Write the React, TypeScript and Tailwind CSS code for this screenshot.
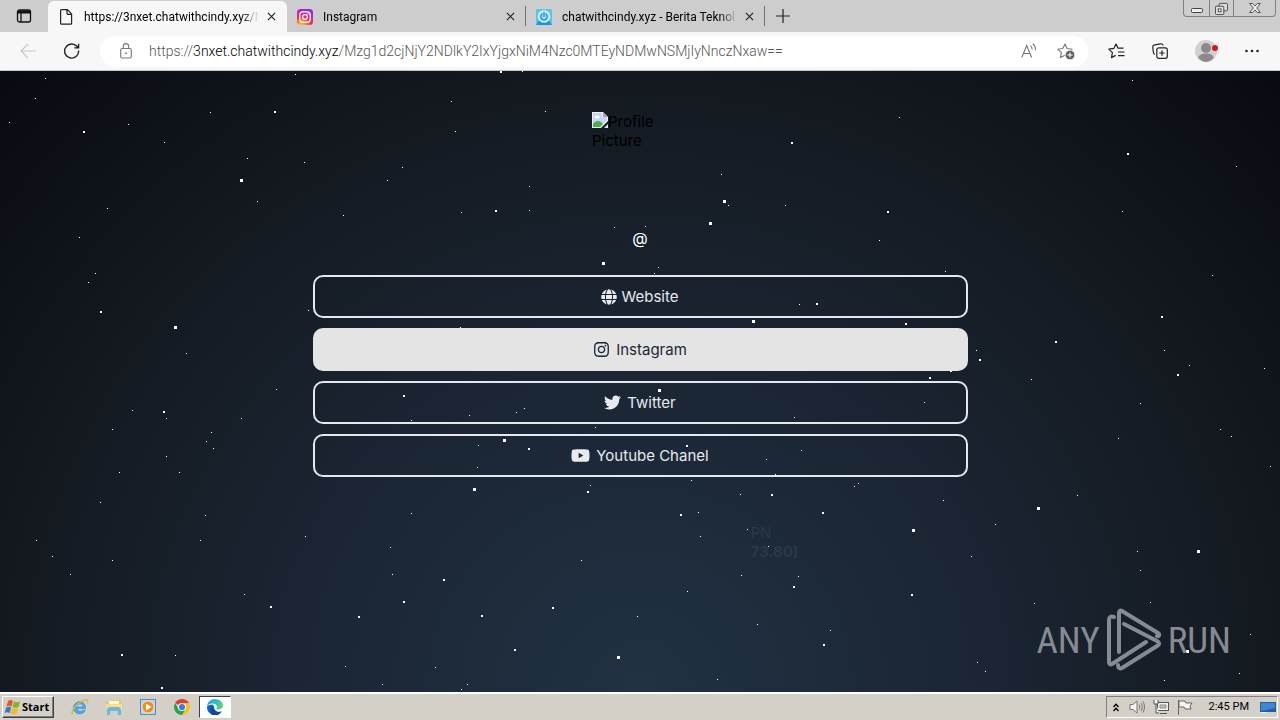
import type { ReactNode } from "react";
import { FaGlobe, FaInstagram, FaTwitter, FaYoutube } from "react-icons/fa";

type Point = [number, number];

const smallStars: Point[] = [
  [45, 78], [35, 98], [9, 122], [295, 74], [128, 124], [210, 112], [164, 142], [247, 158], [304, 162], [257, 201],
  [402, 167], [387, 180], [451, 101], [455, 131], [522, 71], [545, 111], [529, 186], [461, 212], [529, 210], [343, 215],
  [107, 208], [79, 237], [95, 273], [88, 282], [186, 353], [614, 227], [308, 310], [460, 327], [276, 389], [132, 410],
  [166, 418], [112, 429], [241, 418], [211, 432], [206, 441], [213, 448], [166, 456], [119, 472], [179, 472], [100, 502],
  [205, 515], [36, 540], [52, 556], [70, 574], [112, 560], [200, 540], [305, 536], [411, 513], [390, 547], [392, 574],
  [581, 560], [637, 616], [244, 594], [175, 655], [345, 666], [382, 684], [435, 667], [467, 684], [461, 689], [590, 485],
  [477, 467], [478, 445], [469, 415], [516, 412], [524, 408], [411, 420], [595, 427], [1132, 80], [899, 117], [1236, 166],
  [721, 174], [728, 205], [785, 205], [1122, 211], [879, 240], [945, 271], [1212, 275], [645, 226], [658, 267], [654, 273],
  [799, 304], [1164, 350], [1189, 365], [1264, 368], [976, 350], [1031, 379], [924, 402], [794, 417], [1140, 403], [1220, 429],
  [1231, 436], [1118, 438], [707, 435], [801, 450], [766, 459], [775, 474], [691, 480], [740, 494], [854, 486], [858, 483],
  [943, 500], [698, 512], [1077, 495], [1270, 466], [995, 524], [971, 556], [747, 529], [700, 536], [768, 546], [1137, 551],
  [1140, 570], [741, 575], [798, 576], [687, 591], [757, 624], [830, 630], [1034, 603], [1150, 602], [1108, 620], [1250, 634],
  [1239, 673], [1164, 680], [977, 662], [985, 671], [717, 679],
];

const mediumStars: Point[] = [
  [83, 131], [274, 111], [500, 71], [495, 210], [100, 311], [403, 395], [163, 411], [443, 579], [403, 601], [358, 616],
  [481, 615], [552, 607], [270, 606], [121, 654], [161, 687], [514, 649], [587, 491], [528, 448], [791, 142], [1127, 153],
  [887, 211], [816, 303], [905, 323], [1161, 316], [1055, 341], [1177, 374], [979, 359], [950, 370], [929, 377], [686, 445],
  [771, 494], [822, 512], [680, 514], [793, 586], [911, 594], [823, 644],
];

const largeStars: Point[] = [
  [240, 179], [174, 326], [602, 262], [473, 488], [503, 439], [617, 656], [723, 200], [709, 222], [752, 320], [658, 389],
  [912, 529], [1037, 507], [1197, 550], [1186, 650],
];

function Stars({ points, size }: { points: Point[]; size: number }) {
  return (
    <>
      {points.map(([x, y]) => (
        <rect key={`${x}-${y}`} x={x} y={y - 71} width={size} height={size} fill="#fff" />
      ))}
    </>
  );
}

function CloseIcon() {
  return (
    <svg viewBox="0 0 10 10" className="size-[9px]" fill="none" stroke="#222" strokeWidth="1.3">
      <path d="M1 1l8 8M9 1L1 9" />
    </svg>
  );
}

function Tab({ icon, title, active = false }: { icon: ReactNode; title: string; active?: boolean }) {
  return (
    <div
      className={
        active
          ? "flex h-[31px] w-[239px] items-center gap-[10px] rounded-t-md bg-[#f7f7f7] pl-[10px] pr-2"
          : "flex h-[31px] w-[238px] items-center gap-[10px] pl-[10px] pr-[7px]"
      }
    >
      {icon}
      <a
        href="#tab"
        className="min-w-0 flex-1 overflow-hidden whitespace-nowrap text-[12px] leading-4 [mask-image:linear-gradient(to_right,black_90%,transparent)]"
      >
        {title}
      </a>
      <button aria-label={`Close ${title}`} className="-ml-[6px] grid size-4 shrink-0 place-items-center">
        <CloseIcon />
      </button>
    </div>
  );
}

function TabStrip() {
  return (
    <div className="flex h-8 items-end bg-[#cdcdcd]">
      <button aria-label="Tab actions" className="grid h-8 w-12 place-items-center">
        <svg viewBox="0 0 16 16" className="size-4" fill="none" stroke="#111" strokeWidth="1.3">
          <rect x="1.5" y="2" width="13" height="12" rx="2" />
          <path d="M1.5 4h13" strokeWidth="3" />
          <path d="M5 5v9" />
        </svg>
      </button>
      <Tab
        active
        title="https://3nxet.chatwithcindy.xyz/M"
        icon={
          <svg viewBox="0 0 16 16" className="size-4" fill="none" stroke="#222" strokeWidth="1.2">
            <path d="M2.6 1.5c0-.5.3-.8.8-.8h6l4.2 4.2v9.3c0 .6-.3.9-.8.9H3.4c-.5 0-.8-.3-.8-.9zM9 .7v3.8c0 .5.3.8.8.8h3.8" />
          </svg>
        }
      />
      <Tab
        title="Instagram"
        icon={
          <svg viewBox="0 0 16 16" className="size-4" fill="none" stroke="#fff" strokeWidth="1.3">
            <defs>
              <radialGradient id="insta" cx=".28" cy="1.05" r="1.15">
                <stop offset="0" stopColor="#fed33b" />
                <stop offset=".25" stopColor="#fb8a2e" />
                <stop offset=".52" stopColor="#ee2a5d" />
                <stop offset=".78" stopColor="#c724b1" />
                <stop offset="1" stopColor="#7d2ff0" />
              </radialGradient>
            </defs>
            <rect width="16" height="16" rx="3.5" fill="url(#insta)" stroke="none" />
            <rect x="2.8" y="2.8" width="10.4" height="10.4" rx="3" />
            <circle cx="8" cy="8" r="2.4" />
            <circle cx="11" cy="5" r=".7" fill="#fff" stroke="none" />
          </svg>
        }
      />
      <div className="mb-[6px] h-5 w-px bg-[#707070]" />
      <Tab
        title="chatwithcindy.xyz - Berita Teknol"
        icon={
          <svg viewBox="0 0 16 16" className="size-4" fill="none" strokeLinecap="round">
            <rect width="16" height="16" rx="1" fill="#5cc3f0" />
            <path d="M0 16l3-4.500h10l3 4.500z" fill="#1f96dc" />
            <circle cx="8" cy="7.5" r="6.200" fill="#e2f4fc" />
            <circle cx="8" cy="7.5" r="4.900" fill="#a5dcf6" />
            <path d="M6 5.200a3.200 3.200 0 1 0 4 0M8 3.400v4" stroke="#1b8fd6" strokeWidth="1.3" />
          </svg>
        }
      />
      <div className="mb-[6px] h-5 w-px bg-[#707070]" />
      <button aria-label="New tab" className="grid h-8 w-9 place-items-center">
        <svg viewBox="0 0 14 14" className="size-[14px]" stroke="#222" strokeWidth="1.2">
          <path d="M7 0v14M0 7h14" />
        </svg>
      </button>
      <div className="ml-auto mr-1 flex h-[17px] self-start rounded-b border border-t-0 border-[#808080]">
        <button aria-label="Minimize" className="grid w-[25px] place-items-center">
          <svg viewBox="0 0 12 12" className="size-3" fill="#eee" stroke="#444">
            <rect x=".5" y="6.5" width="11" height="4" rx="1" />
          </svg>
        </button>
        <button aria-label="Restore" className="grid w-[25px] place-items-center border-x border-[#808080]">
          <svg viewBox="0 0 14 14" className="size-[13px]" fill="#ddd" stroke="#444">
            <rect x="4.5" y="1.5" width="9" height="8" rx="1" />
            <rect x=".5" y="4.5" width="9" height="9" rx="1" />
            <rect x="3.5" y="7.5" width="3" height="3" fill="#fff" />
          </svg>
        </button>
        <button aria-label="Close window" className="grid w-[41px] place-items-center">
          <svg viewBox="0 0 12 10" className="h-[10px] w-3" fill="#eee" stroke="#444" strokeWidth=".9">
            <path d="M.7.5h3L6 3 8.3.5h3L7.7 5l3.6 4.5h-3L6 7 3.7 9.5h-3L4.3 5z" />
          </svg>
        </button>
      </div>
    </div>
  );
}

function Toolbar() {
  return (
    <div className="flex h-[39px] items-center border-b border-[#c4c8cc] bg-[#f7f7f7]">
      <button aria-label="Back" className="ml-5 grid size-4 place-items-center">
        <svg viewBox="0 0 16 16" className="size-4" fill="none" stroke="#c9c9c9" strokeWidth="1.2">
          <path d="M16 8H1M8 1L1 8l7 7" />
        </svg>
      </button>
      <button aria-label="Refresh" className="ml-7 grid size-4 place-items-center">
        <svg viewBox="0 0 16 16" className="size-4" fill="none" stroke="#222" strokeWidth="1.4">
          <path d="M14.6 7.5A7 7 0 1 1 12 2.6l2.2 2M14.6.7v4.2h-4.3" />
        </svg>
      </button>
      <div className="ml-5 flex h-[31px] min-w-0 flex-1 items-center rounded-full bg-white pl-5 pr-[13px]">
        <svg viewBox="0 0 12 16" className="h-4 w-3 shrink-0" fill="none" stroke="#777" strokeWidth="1.1">
          <rect x=".7" y="5.5" width="10.6" height="9.5" rx="1.5" />
          <path d="M3.3 5.5V3.3a2.7 2.7 0 0 1 5.4 0v2.2" />
          <circle cx="6" cy="10.2" r=".9" fill="#777" stroke="none" />
        </svg>
        <div aria-label="Address" className="ml-[17px] min-w-0 flex-1 overflow-hidden whitespace-nowrap text-[14px] font-light leading-5 text-[#555]">
          https://<span className="text-black">3nxet.chatwithcindy.xyz</span>/Mzg1d2cjNjY2NDlkY2IxYjgxNiM4Nzc0MTEyNDMwNSMjIyNnczNxaw==
        </div>
        <button aria-label="Read aloud" className="grid h-5 w-4 place-items-center">
          <svg viewBox="0 0 16 16" className="size-4" fill="none" stroke="#777" strokeWidth="1.1">
            <path d="M.8 14.5L5.7 2.5l4.9 12M2.5 10.5h6.4M9.5 2.6c1.2 1 1.8 2.3 1.6 4M11.8.8c2 1.6 2.9 4 2.5 6.6" />
          </svg>
        </button>
        <button aria-label="Add to favorites" className="ml-5 grid h-5 w-[18px] place-items-center">
          <svg viewBox="0 0 18 17" className="h-[17px] w-[18px]" fill="none" stroke="#777" strokeWidth="1.1" strokeLinejoin="round">
            <path d="M8 1l2.1 4.5 5 .7-3.6 3.5.7 4.8L8 12.2l-4.5 2.4.9-5L.8 6.200l5-.7z" />
            <circle cx="13" cy="12" r="4.800" fill="#5e5e5e" stroke="#fff" strokeWidth=".8" />
            <path d="M13 9.400v5.200M10.400 12h5.200" stroke="#fff" />
          </svg>
        </button>
      </div>
      <button aria-label="Favorites" className="ml-5 grid h-5 w-[17px] place-items-center">
        <svg viewBox="0 0 17 16" className="h-4 w-[17px]" fill="none" stroke="#222" strokeWidth="1.2" strokeLinejoin="round">
          <path d="M15.500 5.200L10 5.200 8 1 5.800 5.400.8 6.100l3.600 3.500-.9 5L7.600 12.400M10 9h6.500M10 12.700h6.500" />
        </svg>
      </button>
      <button aria-label="Collections" className="ml-[27px] grid h-5 w-4 place-items-center">
        <svg viewBox="0 0 16 16" className="size-4" fill="none" stroke="#222" strokeWidth="1.200">
          <path d="M2.800 11.500C1.700 11 1.500 10 1.300 9L.8 4.500C.6 3 1.400 2 2.800 1.800L8.500.8c1.500-.2 2.300.5 2.700 1.700" />
          <rect x="4.800" y="4.800" width="10.500" height="10.500" rx="2" />
          <path d="M10 7.300v5.400M7.300 10h5.400" />
        </svg>
      </button>
      <button aria-label="Profile" className="ml-[26px] grid h-6 w-6 place-items-center">
        <svg viewBox="0 0 24 24" className="size-6">
          <circle cx="12" cy="12" r="11" fill="#d3d1ce" />
          <circle cx="12" cy="9" r="5" fill="#8b8989" />
          <path d="M4.500 19c0-3 3-4.500 7.500-4.500s7.500 1.500 7.500 4.500A11 11 0 0 1 12 23a11 11 0 0 1-7.500-4z" fill="#8b8989" />
          <circle cx="21" cy="9" r="3" fill="#e31123" />
        </svg>
      </button>
      <button aria-label="Settings and more" className="ml-[26px] mr-5 grid h-5 w-4 place-items-center">
        <svg viewBox="0 0 16 4" className="h-1 w-4" fill="#222">
          <circle cx="2.500" cy="2" r="1.300" />
          <circle cx="8" cy="2" r="1.300" />
          <circle cx="13.500" cy="2" r="1.300" />
        </svg>
      </button>
    </div>
  );
}

function LinkButton({ children, filled = false }: { children: ReactNode; filled?: boolean }) {
  return (
    <a
      href="#link"
      className={
        filled
          ? "flex h-[43px] items-center justify-center rounded-[10px] border-2 border-[#e4e4e4] bg-[#e4e4e4] text-[#1b2735]"
          : "flex h-[43px] items-center justify-center rounded-[10px] border-2 border-[#e4e8ec] text-[#e8eaed]"
      }
    >
      {children}
    </a>
  );
}

function Watermark() {
  return (
    <div className="absolute bottom-5 right-[49px] flex items-center font-['Roboto_Condensed','Roboto',sans-serif] text-[37px] leading-none text-[#868b93]">
      <span>ANY</span>
      <svg viewBox="0 0 56 64" className="mx-[6px] h-16 w-14" fill="none" stroke="currentColor" strokeWidth="4" strokeLinejoin="round" strokeLinecap="round">
        <path d="M8 9c-3-1-5 0-5 3v42c0 2 1 3 3 2l34-22" />
        <path d="M13 44V5c0-2 1-3 3-2l36 22c2 1 1 4-1 3" />
        <path d="M12 57c0 3 2 4 4 3l35-22c3-2 3-3 0-5L18 16" />
      </svg>
      <span>RUN</span>
    </div>
  );
}

function Page() {
  return (
    <main className="relative flex-1 overflow-hidden bg-[#090a0f] bg-[radial-gradient(ellipse_at_bottom,#213243_0%,#1b2534_38%,#141a20_68%,#080a11_100%)] px-6 pt-[41px] font-['Inter',sans-serif] text-[15px] leading-[19px]">
      <svg viewBox="0 0 1280 621" preserveAspectRatio="xMidYMin slice" className="absolute inset-0 size-full" aria-hidden="true">
        <Stars points={smallStars} size={1} />
        <Stars points={mediumStars} size={2} />
        <Stars points={largeStars} size={3} />
      </svg>
      <div className="relative mx-auto flex w-full max-w-[655px] flex-col">
        <div className="mx-auto h-24 w-24 text-black">
          <svg viewBox="0 0 16 16" className="inline-block size-4 align-top" aria-hidden="true">
            <path d="M0 0h11l5 5v4l-7 7H0z" fill="#eef2f8" />
            <path d="M1 1h9v4h5v3l-7 7H1z" fill="#c4d6f3" />
            <path d="M1 15v-3c2-3 5-4 8-2l2 2-3 3z" fill="#4caf50" />
            <ellipse cx="5" cy="5" rx="2.500" ry="1.500" fill="#fff" />
            <path d="M11 0v5h5z" fill="#9aa5b5" />
            <path d="M12 16l4-4v4z" fill="#dfe6ef" />
          </svg>
          Profile Picture
        </div>
        <h1 className="mt-5 text-center text-[16px] leading-5 text-white">@</h1>
        <nav className="mt-[27px] flex flex-col gap-[10px]">
          <LinkButton>
            <FaGlobe className="mr-1 size-4" />
            Website
          </LinkButton>
          <LinkButton filled>
            <FaInstagram className="mr-[6px] size-[17px]" />
            Instagram
          </LinkButton>
          <LinkButton>
            <FaTwitter className="mr-[6px] size-[17px]" />
            Twitter
          </LinkButton>
          <LinkButton>
            <FaYoutube className="mr-[6px] size-[19px]" />
            Youtube Chanel
          </LinkButton>
        </nav>
        <p className="mt-[46px] pl-[438px] text-[#2b3846]">
          PN
          <br />
          <b>73.80)</b>
        </p>
      </div>
      <Watermark />
    </main>
  );
}

function Taskbar() {
  return (
    <footer className="flex h-7 items-center border-t-2 border-white bg-[#d4d0c8] pl-[2px] pr-[2px]">
      <button className="flex h-[22px] w-[52px] items-center gap-px border border-b-[#404040] border-l-white border-r-[#404040] border-t-white pl-px font-['Open_Sans',sans-serif] text-[11px] font-bold shadow-[inset_-1px_-1px_0_#808080]">
        <svg viewBox="0 0 17 16" className="h-4 w-[17px] shrink-0">
          <path d="M4 2c2-1.500 3.500-1 5 0L7.500 7.500c-2-1-3.500-1-5 0z" fill="#e8552c" />
          <path d="M10 2.500c2 1 4 1 6 0L14.500 8c-2 1-4 1-6 0z" fill="#7db52e" />
          <path d="M2.200 8.500c1.500-1 3-1 5 0L5.700 14c-2-1-3.500-1-5 0z" fill="#3977c6" />
          <path d="M8.200 9c2 1 4 1 6 0l-1.500 5.500c-2 1-4 1-6 0z" fill="#f5b81f" />
        </svg>
        Start
      </button>
      <nav className="ml-[9px] flex items-center">
        <button aria-label="Internet Explorer" className="grid h-[22px] w-[34px] place-items-center">
          <svg viewBox="0 0 18 18" className="size-[18px]" fill="none">
            <path d="M14.500 10.500H6.200a3.200 3.200 0 0 0 5.500 1.700h2.600A6.200 6.200 0 1 1 14.500 8z" stroke="#2d86c9" strokeWidth=".5" fill="#48a9e4" />
            <path d="M6.200 8.300a3 3 0 0 1 5.600 0z" fill="#d4e7f2" />
            <path d="M1.500 16.500C-.5 14 5 6 10.500 3.300 16 .5 17.500 1.500 16.300 5" stroke="#e8ae2d" strokeWidth="1.400" />
          </svg>
        </button>
        <button aria-label="Windows Explorer" className="grid h-[22px] w-[34px] place-items-center">
          <svg viewBox="0 0 18 18" className="size-[18px]">
            <path d="M1 4h5l1-2h8l1 2v8H1z" fill="#e6c75f" />
            <path d="M4 3h10v5H4z" fill="#f8f5da" />
            <path d="M1 6h16v6H1z" fill="#f5df8b" />
            <path d="M2 17v-4c0-3 1-4 4-4h6c3 0 4 1 4 4v4h-3v-4H5v4z" fill="#70b5dc" />
          </svg>
        </button>
        <button aria-label="Media Player" className="grid h-[22px] w-[34px] place-items-center">
          <svg viewBox="0 0 16 16" className="size-4">
            <rect x=".5" y=".5" width="15" height="15" fill="#b8d5ef" stroke="#548cc2" />
            <circle cx="8" cy="8" r="6" fill="#f38b1e" stroke="#fff0d5" strokeWidth=".7" />
            <path d="M6 4.500v7L11.500 8z" fill="#fff" />
          </svg>
        </button>
        <button aria-label="Chrome" className="grid h-[22px] w-[34px] place-items-center">
          <svg viewBox="0 0 16 16" className="size-4">
            <path d="M8 8L1.100 4A8 8 0 0 1 14.900 4z" fill="#e43d30" />
            <path d="M8 8V4h6.900A8 8 0 0 1 8 16l3.500-6z" fill="#fbc116" />
            <path d="M8 8l3.500 2L8 16A8 8 0 0 1 1.100 4l3.500 6z" fill="#2ba24c" />
            <circle cx="8" cy="8" r="4" fill="#fff" />
            <circle cx="8" cy="8" r="3.100" fill="#3a7bea" />
          </svg>
        </button>
        <button aria-label="Edge" className="grid h-[22px] w-8 place-items-center border border-b-white border-l-[#404040] border-r-white border-t-[#404040] bg-white">
          <svg viewBox="0 0 16 16" className="size-4">
            <defs>
              <linearGradient id="edge-top" x1="0" y1=".3" x2="1" y2=".5">
                <stop offset="0" stopColor="#1b9de2" />
                <stop offset=".6" stopColor="#2cc3c9" />
                <stop offset="1" stopColor="#66d856" />
              </linearGradient>
            </defs>
            <path d="M0 8a8 8 0 0 0 14.800 4.200c-3 1.500-6.200.4-7.200-2.200L5.500 5.500C2 5.500 0 7 0 8z" fill="#1263b5" />
            <path d="M0 7.800C.2 3.200 3.500 0 8 0c5 0 8 3.500 8 6.600 0 2.300-1.700 3.900-4 3.900-1.600 0-2.600-.5-2.600-1 0-.4.600-.6.600-1.800C10 6 8 4.500 5.500 4.500 2.500 4.500.5 6 0 7.800z" fill="url(#edge-top)" />
            <path d="M5.500 16C2 15 2.500 8 7 6.200c-1.500 4 1 8 7.500 6.300A8 8 0 0 1 5.500 16z" fill="#174a9b" />
          </svg>
        </button>
      </nav>
      <div className="ml-auto flex h-[22px] items-center border border-b-white border-l-[#808080] border-r-white border-t-[#808080] pl-[6px] pr-px">
        <button aria-label="Show hidden icons" className="grid w-[6px] place-items-center">
          <svg viewBox="0 0 6 9" className="h-[9px] w-[6px]" fill="none" stroke="#000" strokeWidth="1.300">
            <path d="M.5 4L3 1.300 5.500 4M.5 8L3 5.300 5.500 8" />
          </svg>
        </button>
        <svg viewBox="0 0 16 16" className="ml-[10px] size-4" fill="none" stroke="#777" strokeWidth="1">
          <path d="M1 5.500h3L8 2v12l-4-3.500H1z" fill="#f4f4f4" />
          <path d="M10 5.500c1 1.500 1 3.500 0 5M12 4c1.700 2.500 1.700 5.500 0 8M14 2.500c2 3.500 2 7.500 0 11" />
        </svg>
        <svg viewBox="0 0 16 16" className="ml-2 size-4" fill="#f1f1f1" stroke="#555" strokeWidth="1">
          <rect x="4.500" y="3.500" width="11" height="8" />
          <path d="M7 6h6v3H7z" fill="#c4c4c4" stroke="#888" />
          <path d="M7 14.500h7M1 1v4h4V1M3 5v9h3" />
        </svg>
        <svg viewBox="0 0 16 16" className="ml-2 size-4" fill="#f4f4f4" stroke="#666" strokeWidth="1">
          <path d="M1.500 16V1M2 2h6l1 2h6l-2 3 1 3H8L7 8H2z" />
        </svg>
        <time className="ml-4 whitespace-nowrap text-[11px] leading-4">2:45 PM</time>
        <svg viewBox="0 0 16 14" className="ml-[11px] h-[14px] w-4">
          <path d="M0 2h16v10H0z" fill="#215ea8" />
          <path d="M1 3h14v5L1 11z" fill="#3f87d0" />
          <path d="M1 12h5v1H1z" fill="#eaf2fb" />
        </svg>
      </div>
    </footer>
  );
}

export default function App() {
  return (
    <div className="flex min-h-screen flex-col bg-white font-['Roboto',sans-serif] text-black">
      <header>
        <TabStrip />
        <Toolbar />
      </header>
      <Page />
      <Taskbar />
    </div>
  );
}
